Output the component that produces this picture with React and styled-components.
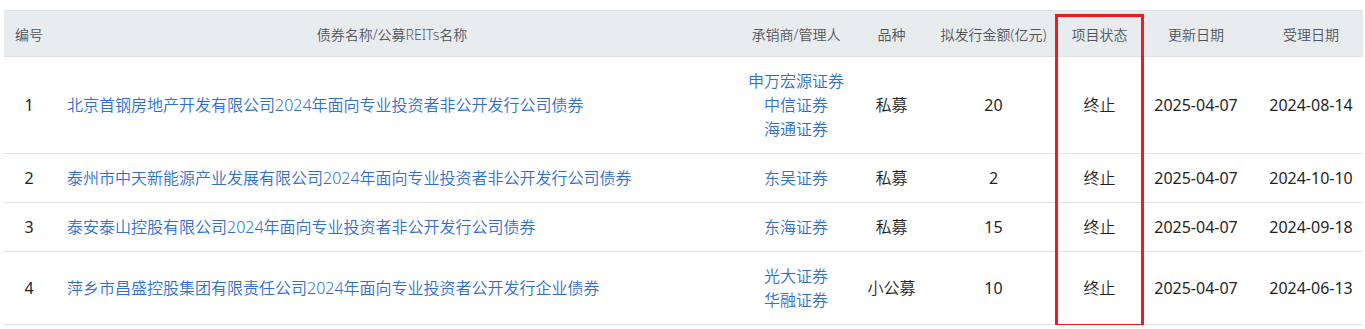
import React from 'react'
import styled, {createGlobalStyle} from 'styled-components'

const GlobalStyle = createGlobalStyle`
    body {
        margin: 0;
        padding: 10px 0 0 4px;
        background: #ffffff;
        font-family: "Noto Sans", "Noto Sans CJK SC", sans-serif;
    }
`

const Wrapper = styled.div`
    position: relative;
    width: 1359px;
`

const Table = styled.table`
    width: 100%;
    border-collapse: collapse;
    table-layout: fixed;
`

const HeadCell = styled.th`
    height: 45px;
    padding: 0 4px;
    background: #e9ecef;
    border-top: 1px solid #dfe2e6;
    border-bottom: 1px solid #dfe2e6;
    color: #50555b;
    font-size: 14px;
    font-weight: 350;
    text-align: center;
    white-space: nowrap;
`

const Row = styled.tr`
    border-bottom: 1px solid #e0e2e6;
`

const Cell = styled.td`
    padding: 12px ${p => (p.$left ? '13px' : '2px')};
    font-size: 16px;
    font-weight: ${p => (p.$num ? 400 : 350)};
    line-height: 24px;
    color: #1f1f1f;
    text-align: ${p => (p.$left ? 'left' : 'center')};
    white-space: nowrap;
`

const Link = styled.a`
    color: #2f6fd2;
    text-decoration: none;
    cursor: pointer;
`

const LinkLine = styled(Link)`
    display: block;
`

const Highlight = styled.div`
    position: absolute;
    left: 1051px;
    top: 4px;
    width: 83px;
    height: 307px;
    border: 3px solid #ea1c24;
    pointer-events: none;
`

const columns = [
    {title: '编号', width: 50},
    {title: '债券名称/公募REITs名称', width: 676},
    {title: '承销商/管理人', width: 132},
    {title: '品种', width: 59},
    {title: '拟发行金额(亿元)', width: 145},
    {title: '项目状态', width: 67},
    {title: '更新日期', width: 126},
    {title: '受理日期', width: 104},
]

const rows = [
    {
        no: 1,
        name: '北京首钢房地产开发有限公司2024年面向专业投资者非公开发行公司债券',
        underwriters: ['申万宏源证券', '中信证券', '海通证券'],
        kind: '私募',
        amount: '20',
        status: '终止',
        updated: '2025-04-07',
        accepted: '2024-08-14',
    },
    {
        no: 2,
        name: '泰州市中天新能源产业发展有限公司2024年面向专业投资者非公开发行公司债券',
        underwriters: ['东吴证券'],
        kind: '私募',
        amount: '2',
        status: '终止',
        updated: '2025-04-07',
        accepted: '2024-10-10',
    },
    {
        no: 3,
        name: '泰安泰山控股有限公司2024年面向专业投资者非公开发行公司债券',
        underwriters: ['东海证券'],
        kind: '私募',
        amount: '15',
        status: '终止',
        updated: '2025-04-07',
        accepted: '2024-09-18',
    },
    {
        no: 4,
        name: '萍乡市昌盛控股集团有限责任公司2024年面向专业投资者公开发行企业债券',
        underwriters: ['光大证券', '华融证券'],
        kind: '小公募',
        amount: '10',
        status: '终止',
        updated: '2025-04-07',
        accepted: '2024-06-13',
    },
]

export default function App() {
    return (
        <>
            <GlobalStyle />
            <Wrapper>
                <Table>
                    <colgroup>
                        {columns.map(c => (
                            <col key={c.title} style={{width: c.width}} />
                        ))}
                    </colgroup>
                    <thead>
                        <tr>
                            {columns.map(c => (
                                <HeadCell key={c.title}>{c.title}</HeadCell>
                            ))}
                        </tr>
                    </thead>
                    <tbody>
                        {rows.map(r => (
                            <Row key={r.no}>
                                <Cell $num>{r.no}</Cell>
                                <Cell $left>
                                    <Link>{r.name}</Link>
                                </Cell>
                                <Cell>
                                    {r.underwriters.map(u => (
                                        <LinkLine key={u}>{u}</LinkLine>
                                    ))}
                                </Cell>
                                <Cell>{r.kind}</Cell>
                                <Cell $num>{r.amount}</Cell>
                                <Cell>{r.status}</Cell>
                                <Cell $num>{r.updated}</Cell>
                                <Cell $num>{r.accepted}</Cell>
                            </Row>
                        ))}
                    </tbody>
                </Table>
                <Highlight />
            </Wrapper>
        </>
    )
}
